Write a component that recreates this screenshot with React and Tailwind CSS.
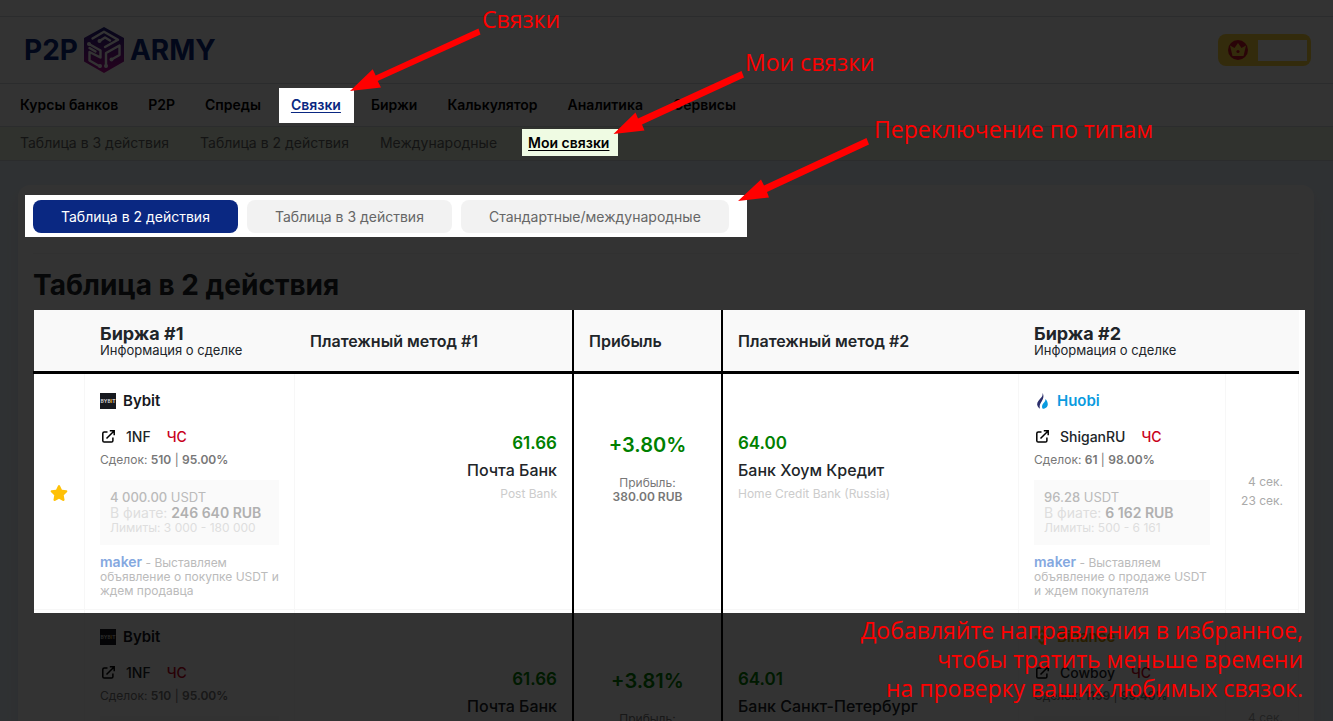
import React from 'react';
import { FaStar } from 'react-icons/fa';

const menu = ['Курсы банков', 'P2P', 'Спреды', 'Связки', 'Биржи', 'Калькулятор', 'Аналитика', 'Сервисы'];
const submenu = ['Таблица в 3 действия', 'Таблица в 2 действия', 'Международные', 'Мои связки'];
const tabs = ['Таблица в 2 действия', 'Таблица в 3 действия', 'Стандартные/международные'];

const rows = [
  {
    buy: { exchange: 'Bybit', user: '1NF', deals: '510', rate: '95.00%', amount: '4 000.00', fiat: '246 640 RUB', limits: '3 000 - 180 000', note: 'Выставляем объявление о покупке USDT и ждем продавца' },
    sell: { exchange: 'Huobi', user: 'ShiganRU', deals: '61', rate: '98.00%', amount: '96.28', fiat: '6 162 RUB', limits: '500 - 6 161', note: 'Выставляем объявление о продаже USDT и ждем покупателя' },
    buyPrice: '61.66', buyBank: 'Почта Банк', buyBankEn: 'Post Bank',
    sellPrice: '64.00', sellBank: 'Банк Хоум Кредит', sellBankEn: 'Home Credit Bank (Russia)',
    percent: '+3.80%', profit: '380.00 RUB', times: ['4 сек.', '23 сек.'],
  },
  {
    buy: { exchange: 'Bybit', user: '1NF', deals: '510', rate: '95.00%', amount: '4 000.00', fiat: '246 640 RUB', limits: '3 000 - 180 000', note: 'Выставляем объявление о покупке USDT и ждем продавца' },
    sell: { exchange: 'Binance', user: 'Cowboy', deals: '1159', rate: '99.40%', amount: '96.28', fiat: '6 162 RUB', limits: '500 - 6 161', note: 'Выставляем объявление о продаже USDT и ждем покупателя' },
    buyPrice: '61.66', buyBank: 'Почта Банк', buyBankEn: 'Post Bank',
    sellPrice: '64.01', sellBank: 'Банк Санкт-Петербург', sellBankEn: 'Bank Saint Petersburg',
    percent: '+3.81%', profit: '381.00 RUB', times: ['4 сек.', '23 сек.'],
  },
];

const exchangeColors = {
  Bybit: 'text-[#16181e]',
  Huobi: 'text-[#0a9be0]',
  Binance: 'text-[#c99400]',
};

function CubeLogo() {
  return (
    <svg width="42" height="48" viewBox="0 0 42 48">
      <defs>
        <linearGradient id="cube" x1="0" y1="0" x2="0" y2="1">
          <stop offset="0" stopColor="#1c1f80" />
          <stop offset="0.5" stopColor="#6b1a90" />
          <stop offset="1" stopColor="#c00a96" />
        </linearGradient>
      </defs>
      <path d="M21 1 41 12V35.500L21 47 1 35.500V12Z" fill="url(#cube)" />
      <g stroke="#fff" strokeWidth="2.400" fill="none" strokeLinejoin="round" strokeLinecap="round">
        <path d="M9.500 12.500 21 5.800 35 13.800 22 21" />
        <path d="M16.500 15 22 11.500 27 14.500" />
        <path d="M6 18 17.500 24.500V31.500L6.500 26V34.500L17 40.500" />
        <path d="M6.500 22 12.500 25.500" />
        <path d="M23 40V27L36.500 19.500V29L28.500 33.500" />
      </g>
      <g fill="#fff">
        <circle cx="6" cy="18" r="2" />
        <circle cx="16.500" cy="15" r="2" />
        <circle cx="17" cy="40" r="2" />
        <circle cx="23" cy="40" r="2" />
        <circle cx="28.500" cy="33.500" r="2" />
      </g>
    </svg>
  );
}

function ExchangeIcon({ name }) {
  if (name === 'Bybit') {
    return (
      <span className="flex h-4 w-4 items-center justify-center bg-[#16181e] text-[5px] leading-none font-bold text-[#ccc]">
        BYB<span className="text-[#f7a600]">I</span>T
      </span>
    );
  }
  if (name === 'Huobi') {
    return (
      <svg width="16" height="16" viewBox="0 0 16 16">
        <path d="M8.500 0c.6 3-1 4.200-2.600 6C3.500 8.700 2.300 11 3.800 13.600c.5.900 1.300 1.700 2.200 2.200-.7-2.600-.3-4.300 1-6.300C8.800 6.800 10.600 3.500 8.500 0Z" fill="#2b2f6b" />
        <path d="M11.400 6c.3 2-1 3-2.200 4.400-1.300 1.600-1.600 3.600-.5 5.400 2.700-.2 5.100-1.800 5.100-4.600 0-2-1-4-2.400-5.200Z" fill="#0a9be0" />
      </svg>
    );
  }
  return (
    <svg width="16" height="16" viewBox="0 0 16 16" fill="#f0b90b">
      <path d="m8 0 4 4-1.500 1.500L8 3 5.500 5.500 4 4ZM8 16l-4-4 1.500-1.500L8 13l2.500-2.500L12 12ZM0 8l2-2 2 2-2 2ZM12 8l2-2 2 2-2 2ZM8 5.500 10.500 8 8 10.500 5.500 8Z" />
    </svg>
  );
}

function Deal({ deal }) {
  return (
    <div className="px-[15px] pt-[17px] pb-3">
      <div className="flex h-5 items-center gap-[7px]">
        <ExchangeIcon name={deal.exchange} />
        <span className={`text-[15px] font-semibold ${exchangeColors[deal.exchange]}`}>{deal.exchange}</span>
      </div>
      <div className="mt-[15px] flex h-5 items-center text-[14px] font-medium">
        <svg className="ml-[2px]" width="13" height="13" viewBox="0 0 13 13" fill="none" stroke="#000" strokeWidth="1.500">
          <path d="M5.500 2H2.200Q.8 2 .8 3.400v7.300q0 1.400 1.400 1.400h7.300q1.400 0 1.400-1.400V7.500M4.500 8.500 11.800 1.200M7.800.8h4.400v4.400" />
        </svg>
        <span className="ml-[11px]">{deal.user}</span>
        <a href="#blacklist" className="ml-4 text-[#c8001a]">ЧС</a>
      </div>
      <div className="mt-[6px] text-[12px] leading-4 text-[#777]">
        Сделок: <b className="font-semibold">{deal.deals}</b> | <b className="font-semibold">{deal.rate}</b>
      </div>
      <div className="mt-3 bg-[#fafafa] px-[10px] pt-[9px] pb-[10px] whitespace-nowrap text-[#dedede]">
        <div className="text-[13px] leading-4 text-[#bbb]"><span className="font-medium">{deal.amount}</span> USDT</div>
        <div className="text-[14px] leading-4">
          В фиате: <b className="font-semibold text-[#b0b0b0]">{deal.fiat}</b>
        </div>
        <div className="text-[12px] leading-[14px]">Лимиты: {deal.limits}</div>
      </div>
      <p className="mt-[10px] text-[12px] leading-[14px] text-[#bbb]">
        <b className="text-[14px] font-semibold text-[#84a8e0]">maker</b> - {deal.note}
      </p>
    </div>
  );
}

function Bank({ price, name, nameEn, align }) {
  return (
    <div className={`px-[15px] pt-[57px] whitespace-nowrap ${align}`}>
      <div className="text-[17px] leading-6 font-semibold text-[#008000]">{price}</div>
      <div className="mt-[3px] text-[16px] leading-6 font-medium">{name}</div>
      <div className="mt-1 text-[12px] leading-4 text-[#ccc]">{nameEn}</div>
    </div>
  );
}

function Row({ row }) {
  return (
    <tr className="align-top [&>td]:shadow-[inset_0_-1px_0_#f7f7f7]">
      <td className="border-r border-r-[#f7f7f7] pt-[110px]">
        <button className="mx-auto block text-[#ffc107]" aria-label="Избранное">
          <FaStar size={18} />
        </button>
      </td>
      <td className="border-r border-r-[#f7f7f7]"><Deal deal={row.buy} /></td>
      <td className="border-r-2 border-r-black"><Bank price={row.buyPrice} name={row.buyBank} nameEn={row.buyBankEn} align="text-right" /></td>
      <td className="border-r-2 border-r-black pt-[57px] text-center">
        <div className="text-[20px] leading-7 font-semibold text-[#008000]">{row.percent}</div>
        <div className="mt-[17px] text-[12px] leading-[14px] text-[#777]">
          Прибыль:<br /><b className="font-semibold">{row.profit}</b>
        </div>
      </td>
      <td className="border-r border-r-[#f7f7f7]"><Bank price={row.sellPrice} name={row.sellBank} nameEn={row.sellBankEn} align="text-left" /></td>
      <td className="border-r border-r-[#f7f7f7]"><Deal deal={row.sell} /></td>
      <td className="border-r border-r-[#f7f7f7] pt-[98px] pr-[15px] text-right text-[12px] leading-[19px] text-[#aaa]">
        {row.times.map((time) => <div key={time}>{time}</div>)}
      </td>
    </tr>
  );
}

// Dims the page and leaves the areas of interest lit, with arrows pointing at them
function Tour() {
  return (
    <div className="pointer-events-none absolute inset-0 overflow-hidden font-['Open_Sans',sans-serif] text-[23px] leading-[29px] text-[#ff0000]">
      <svg className="absolute top-0 left-0" width="4000" height="3000" viewBox="0 0 4000 3000">
        <path
          fill="#000"
          fillOpacity="0.8"
          fillRule="evenodd"
          d="M0 0H4000V3000H0ZM279 88H354V123H279ZM522 129H618V156H522ZM25 195H747V237H25ZM34 310H1305V613H34Z"
        />
        <g fill="#f00">
          <path d="M478.500 28.500 480.500 34.500 377.700 81 381 87.500 350 91 372.700 69.300 375.700 75.500Z" />
          <path d="M741.500 71 744 77.500 642 124.500 644.500 130.500 613.500 134 635.500 112.500 638 118.500Z" />
          <path d="M866.500 138 869 144.500 767 192 769 197.500 738 201 761 179.500 764 185.500Z" />
        </g>
      </svg>
      <span className="absolute top-[5px] left-[482px]">Связки</span>
      <span className="absolute top-[48px] left-[745px]">Мои связки</span>
      <span className="absolute top-[115px] left-[874px]">Переключение по типам</span>
      <p className="absolute top-[616px] left-[840px] w-[463px] text-right whitespace-nowrap">
        Добавляйте направления в избранное,<br />
        чтобы тратить меньше времени<br />
        на проверку ваших любимых связок.
      </p>
    </div>
  );
}

export default function App() {
  return (
    <div className="relative h-screen overflow-hidden bg-[#ebf3fc] font-[Inter,sans-serif] text-[#212529]">
      <div className="h-[17px] border-b border-[#d5d9e2] bg-white" />
      <header className="flex h-[67px] items-center justify-between border-b border-[#d5d9e2] bg-white pr-[22px] pl-6">
        <a href="#home" className="flex items-center gap-[5px] text-[28px] leading-none font-bold text-[#0a2882]">
          P2P
          <CubeLogo />
          ARMY
        </a>
        <div className="flex h-8 items-center gap-[10px] rounded-lg bg-[#ffd53c] pr-1 pl-[10px]">
          <svg width="20" height="20" viewBox="0 0 20 20">
            <circle cx="10" cy="10" r="10" fill="#d01828" />
            <path d="M2 5.500 6.500 8 10 3l3.500 5L18 5.500 15.500 16h-11Z" fill="#ffd53c" />
            <circle cx="10" cy="11.500" r="1.600" fill="#d01828" />
          </svg>
          <span className="h-[21px] w-[49px] bg-white" />
        </div>
      </header>

      <nav className="flex h-[43px] items-center gap-[30px] border-b border-[#d5d9e2] bg-white pb-[2px] pl-5 text-[14px] font-semibold whitespace-nowrap text-black">
        {menu.map((item) => (
          <a key={item} href="#menu" className={item === 'Связки' ? 'text-[#0a2882] underline underline-offset-2' : ''}>{item}</a>
        ))}
      </nav>
      <nav className="flex h-[34px] items-center gap-[31px] border-b border-[#d5d9e2] bg-[#effbe3] pb-[2px] pl-5 text-[14px] whitespace-nowrap text-[#666]">
        {submenu.map((item) => (
          <a key={item} href="#submenu" className={item === 'Мои связки' ? 'font-semibold text-black underline underline-offset-2' : ''}>{item}</a>
        ))}
      </nav>

      <main className="mt-6 mr-[19px] ml-[18px] rounded-xl bg-white px-[15px] pt-[15px] shadow-lg shadow-slate-300/40">
        <div className="flex gap-[9px] border-b border-[#f3f3f3] pb-5">
          {tabs.map((tab, i) => (
            <button
              key={tab}
              className={`h-[33px] rounded-lg px-7 text-[14px] ${i === 0 ? 'bg-[#0a2882] text-white' : 'bg-[#f2f2f2] text-[#666]'}`}
            >
              {tab}
            </button>
          ))}
        </div>
        <h1 className="mt-[13px] text-[28px] leading-9 font-bold">Таблица в 2 действия</h1>

        <table className="mt-[7px] w-full table-fixed border-separate border-spacing-0">
          <colgroup>
            <col className="w-[52px]" />
            <col className="w-[210px]" />
            <col className="w-[279px]" />
            <col className="w-[149px]" />
            <col />
            <col className="w-[207px]" />
            <col className="w-[73px]" />
          </colgroup>
          <thead>
            <tr className="h-16 bg-[#f9f9f9] text-left text-[16px] [&>th]:border-b-[3px] [&>th]:border-b-black [&>th]:px-[15px] [&>th]:font-semibold">
              <th></th>
              <th>
                <div className="text-[18px] leading-[18px] font-bold">Биржа #1</div>
                <div className="text-[13px] leading-[14px] font-normal">Информация о сделке</div>
              </th>
              <th className="border-r-2 border-r-black">Платежный метод #1</th>
              <th className="border-r-2 border-r-black">Прибыль</th>
              <th>Платежный метод #2</th>
              <th>
                <div className="text-[18px] leading-[18px] font-bold">Биржа #2</div>
                <div className="text-[13px] leading-[14px] font-normal">Информация о сделке</div>
              </th>
              <th></th>
            </tr>
          </thead>
          <tbody>
            {rows.map((row) => <Row key={row.percent} row={row} />)}
          </tbody>
        </table>
      </main>

      <Tour />
    </div>
  );
}
